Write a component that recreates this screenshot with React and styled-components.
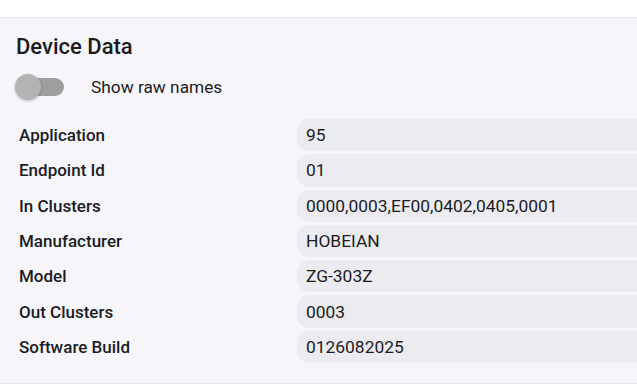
import React, { useState } from "react";
import styled, { createGlobalStyle } from "styled-components";

const Global = createGlobalStyle`
  html, body { margin: 0; padding: 0; background: #ffffff; overflow: hidden; }
  body { font-family: Roboto, "Noto Sans", sans-serif; color: #1c1c1f; }
`;

const Page = styled.div`
  width: 637px;
  height: 387px;
  padding-top: 17px;
  box-sizing: border-box;
  overflow: hidden;
`;

const Panel = styled.section`
  width: 760px;
  background: #f6f6fa;
  border-top: 1px solid #e6e6ea;
  border-bottom: 1px solid #e6e6ea;
  padding: 14px 0 20px 16px;
  box-sizing: border-box;
`;

const Title = styled.h2`
  margin: 0;
  font-size: 22px;
  font-weight: 500;
  line-height: 30px;
  color: #1c1c1f;
`;

const ToggleRow = styled.label`
  display: flex;
  align-items: center;
  gap: 27px;
  margin-top: 11px;
  height: 28px;
  cursor: pointer;
`;

const Track = styled.span`
  position: relative;
  display: inline-block;
  width: 48px;
  height: 18px;
  border-radius: 9px;
  background: ${(p) => (p.$on ? "#7aa7f0" : "#9e9e9e")};
`;

const Thumb = styled.span`
  position: absolute;
  top: -4px;
  left: ${(p) => (p.$on ? "22px" : "-1px")};
  width: 26px;
  height: 26px;
  border-radius: 50%;
  background: ${(p) => (p.$on ? "#03a9f4" : "#b3b3b3")};
  box-shadow: 0 1px 3px rgba(0, 0, 0, 0.25);
`;

const ToggleText = styled.span`
  font-size: 17.3px;
  color: #1c1c1f;
`;

const Table = styled.div`
  display: grid;
  grid-template-columns: 281px 1fr;
  grid-auto-rows: 32.3px;
  row-gap: 3px;
  margin-top: 18px;
`;

const Label = styled.div`
  font-size: 17px;
  font-weight: 500;
  padding-left: 3px;
  display: flex;
  align-items: center;
  color: #1c1c1f;
`;

const Value = styled.div`
  background: #ebebf0;
  border-radius: 12px;
  display: flex;
  align-items: center;
  padding-left: 9px;
  font-size: 17.4px;
  color: #1c1c1f;
`;

const rows = [
  ["Application", "95"],
  ["Endpoint Id", "01"],
  ["In Clusters", "0000,0003,EF00,0402,0405,0001"],
  ["Manufacturer", "HOBEIAN"],
  ["Model", "ZG-303Z"],
  ["Out Clusters", "0003"],
  ["Software Build", "0126082025"],
];

export default function App() {
  const [raw, setRaw] = useState(false);
  return (
    <Page>
      <Global />
      <Panel>
        <Title>Device Data</Title>
        <ToggleRow onClick={() => setRaw(!raw)}>
          <Track $on={raw}>
            <Thumb $on={raw} />
          </Track>
          <ToggleText>Show raw names</ToggleText>
        </ToggleRow>
        <Table>
          {rows.map(([k, v]) => (
            <React.Fragment key={k}>
              <Label>{k}</Label>
              <Value>{v}</Value>
            </React.Fragment>
          ))}
        </Table>
      </Panel>
    </Page>
  );
}
